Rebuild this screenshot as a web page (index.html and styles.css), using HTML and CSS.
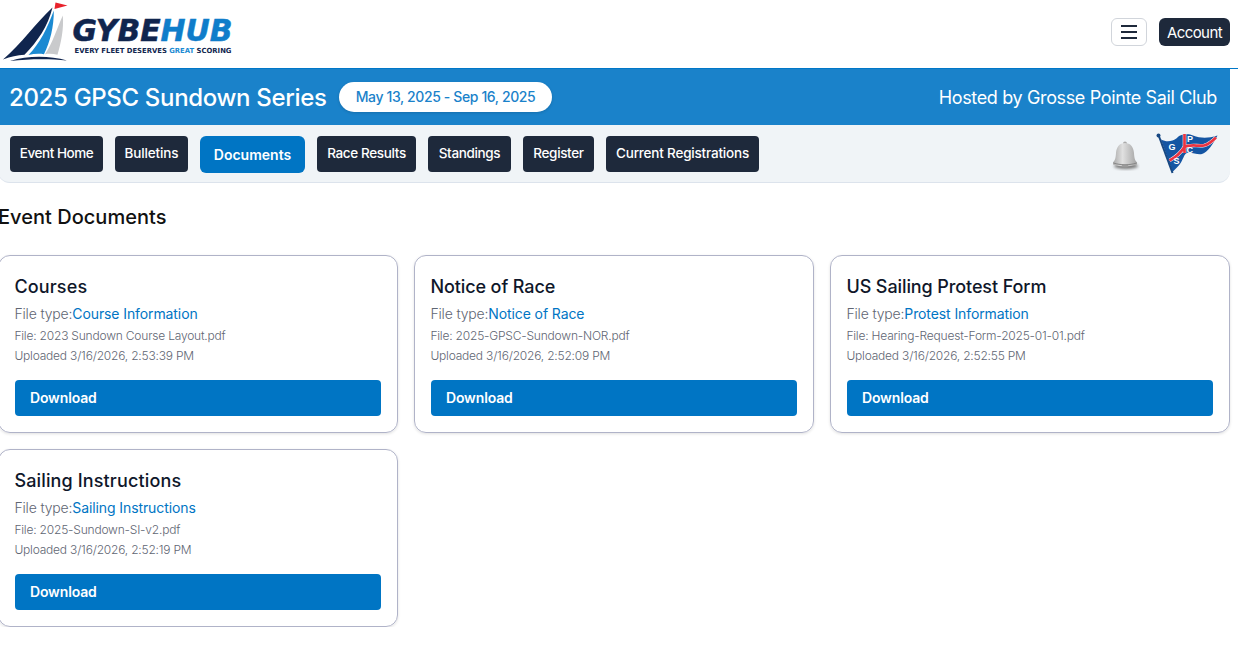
FILE: index.html
```html
<!DOCTYPE html>
<html lang="en">
<head>
    <meta charset="UTF-8">
    <meta name="viewport" content="width=device-width, initial-scale=1.0">
    <title>2025 GPSC Sundown Series - GybeHub</title>
    <link rel="stylesheet" href="styles.css">
</head>
<body>
    <!-- Top bar -->
    <header class="top-bar">
        <a href="#" class="logo">
            <svg width="240" height="68" viewBox="0 0 240 68" role="img" aria-label="GybeHub">
                <path d="M52.500 7.500C35 24 22 43 3 59.500c8-3 14-4.300 21.500-4.800C38 41 48 26 52.500 7.500z" fill="#10254e"/>
                <path d="M53.800 10.500C47 29 40 43 28.500 55c5-1.200 10.500-1.500 15.500-.8C50 42 54 27 53.800 10.500z" fill="#1b8ad2"/>
                <path d="M62.800 15.500C56 31 53 42 45 54.200c4-.6 8.500-.4 12.500.6C61 43 64 29 62.800 15.500z" fill="#c9cacc"/>
                <path d="M55.500 2.500L67.500 5.500 54.500 9z" fill="#e8222c"/>
                <path d="M10 61c18-5.500 39-5.500 57-.5-18-2-37-1.800-57 .5z" fill="#10254e"/>
                <text class="logo-name" x="72.500" y="41" textLength="160" lengthAdjust="spacingAndGlyphs"><tspan fill="#10254e" stroke="#10254e">GYBE</tspan><tspan fill="#0f7dca" stroke="#0f7dca">HUB</tspan></text>
                <text class="logo-tagline" x="74.500" y="53" textLength="157" lengthAdjust="spacingAndGlyphs"><tspan>EVERY FLEET DESERVES </tspan><tspan fill="#1b8ad2">GREAT</tspan><tspan> SCORING</tspan></text>
            </svg>
        </a>
        <div class="top-actions">
            <button class="menu-button" aria-label="Menu">
                <svg width="18" height="16" viewBox="0 0 18 16"><path d="M1 2h16M1 8h16M1 14h16" stroke="#1e293b" stroke-width="2"/></svg>
            </button>
            <button class="account-button">Account</button>
        </div>
    </header>

    <main class="event">
        <!-- Event banner -->
        <div class="banner">
            <h1 class="event-title">2025 GPSC Sundown Series</h1>
            <span class="event-dates">May 13, 2025 - Sep 16, 2025</span>
            <span class="event-host">Hosted by Grosse Pointe Sail Club</span>
        </div>

        <nav class="event-nav">
            <a href="#" class="nav-button home">Event Home</a>
            <a href="#" class="nav-button bulletins">Bulletins</a>
            <a href="#" class="nav-button active">Documents</a>
            <a href="#" class="nav-button results">Race Results</a>
            <a href="#" class="nav-button standings">Standings</a>
            <a href="#" class="nav-button register">Register</a>
            <a href="#" class="nav-button registrations">Current Registrations</a>
            <svg class="bell" width="30" height="32" viewBox="0 0 30 32">
                <defs>
                    <linearGradient id="bell-metal">
                        <stop offset="0" stop-color="#aaa"/>
                        <stop offset=".4" stop-color="#e0e0e0"/>
                        <stop offset="1" stop-color="#a3a3a3"/>
                    </linearGradient>
                </defs>
                <ellipse class="bell-shadow" cx="16" cy="27" rx="12" ry="3"/>
                <circle cx="15" cy="4.500" r="2" fill="#aaa"/>
                <path d="M15 4c5.500 0 8.500 4 9 10 .3 5 .8 7 3 9.500v2c-7 2.500-17 2.500-24 0v-2c2.200-2.500 2.700-4.500 3-9.500.5-6 3.500-10 9-10z" fill="url(#bell-metal)"/>
                <path d="M3.500 24c6.500 2.300 16.500 2.300 23 0" fill="none" stroke="#858585"/>
                <ellipse cx="15" cy="27" rx="3.500" ry="1.600" fill="#999"/>
            </svg>
            <svg class="burgee" width="62" height="44" viewBox="0 0 62 44">
                <path d="M5 6.500c6 3 11 2 16-1.500C23 1.500 32 0 37 2.500c8 3 15 3 24.500 0C57 11 52 19 46 21c-5 1-10-2-15-1-3 1-4 7-7 11-2 3-5 5-7.500 8z" fill="#1455a3"/>
                <path d="M13.500 27.500C20 24 24 21 28 14.500c6-4 13-1 20-2 5-1 8-4 12-8" fill="none" stroke="#fff" stroke-width="3.600"/>
                <path d="M28.500 1v19" stroke="#fff" stroke-width="3.600"/>
                <path d="M13.500 27.500C20 24 24 21 28 14.500c6-4 13-1 20-2 5-1 8-4 12-8M28.500 1v19" fill="none" stroke="#e93442" stroke-width="2.700"/>
                <path d="M2.500 2L16.500 40" stroke="#174883" stroke-width="2"/>
                <circle cx="2.500" cy="2.500" r="2" fill="#174883"/>
                <g class="burgee-letters">
                    <text x="12.500" y="17">G</text>
                    <text x="31" y="8.500">P</text>
                    <text x="30.500" y="20">C</text>
                    <text x="17.500" y="31">S</text>
                </g>
            </svg>
        </nav>

        <h2 class="section-title">Event Documents</h2>

        <!-- Documents -->
        <div class="documents">
            <article class="card">
                <h3 class="card-title wide">Courses</h3>
                <p class="file-type">File type:<span>Course Information</span></p>
                <p class="file-info">File: 2023 Sundown Course Layout.pdf</p>
                <p class="file-info">Uploaded 3/16/2026, 2:53:39 PM</p>
                <a href="#" class="download">Download</a>
            </article>
            <article class="card">
                <h3 class="card-title">Notice of Race</h3>
                <p class="file-type">File type:<span>Notice of Race</span></p>
                <p class="file-info">File: 2025-GPSC-Sundown-NOR.pdf</p>
                <p class="file-info">Uploaded 3/16/2026, 2:52:09 PM</p>
                <a href="#" class="download">Download</a>
            </article>
            <article class="card">
                <h3 class="card-title">US Sailing Protest Form</h3>
                <p class="file-type">File type:<span>Protest Information</span></p>
                <p class="file-info">File: Hearing-Request-Form-2025-01-01.pdf</p>
                <p class="file-info">Uploaded 3/16/2026, 2:52:55 PM</p>
                <a href="#" class="download">Download</a>
            </article>
            <article class="card">
                <h3 class="card-title wide">Sailing Instructions</h3>
                <p class="file-type">File type:<span>Sailing Instructions</span></p>
                <p class="file-info">File: 2025-Sundown-SI-v2.pdf</p>
                <p class="file-info">Uploaded 3/16/2026, 2:52:19 PM</p>
                <a href="#" class="download">Download</a>
            </article>
        </div>
    </main>
</body>
</html>
```

FILE: styles.css
```css
* {
    box-sizing: border-box;
}

body {
    margin: 0;
    font-family: Inter, "Open Sans", sans-serif;
    background-color: #fff;
    color: #0f172a;
    overflow-x: hidden;
}

h1, h2, h3, p {
    margin: 0;
    font-weight: 500;
}

a {
    text-decoration: none;
}

svg {
    display: block;
}

/* Top bar */
.top-bar {
    height: 69px;
    display: flex;
    justify-content: space-between;
    border-bottom: 1px solid #0077c8;
    padding-right: 8px;
}

.logo-name {
    font: italic bold 29.5px "DejaVu Sans", sans-serif;
    stroke-width: 0.5px;
}

.logo-tagline {
    font: bold 7px "DejaVu Sans", sans-serif;
    fill: #10254e;
}

.top-actions {
    display: flex;
    gap: 12px;
    padding-top: 18px;
}

.menu-button {
    width: 36px;
    height: 28px;
    padding: 0;
    display: flex;
    align-items: center;
    justify-content: center;
    background-color: #fff;
    border: 1px solid #d1d5db;
    border-radius: 6px;
}

.account-button {
    width: 71px;
    height: 28px;
    padding: 0;
    font: 15px Inter, sans-serif;
    letter-spacing: -0.6px;
    color: #fff;
    background-color: #1e293b;
    border: none;
    border-radius: 6px;
}

/* Event banner */
.event {
    width: 1232px;
    margin-left: -2px;
}

.banner {
    height: 56px;
    display: flex;
    align-items: center;
    padding: 0 13px 0 11px;
    background-color: #1a82ca;
    color: #fff;
}

.event-title {
    width: 330px;
    font-size: 24px;
    letter-spacing: -0.33px;
    white-space: nowrap;
}

.event-dates {
    width: 213px;
    height: 30px;
    line-height: 30px;
    border-radius: 15px;
    background-color: #fff;
    color: #1a82ca;
    font-size: 14px;
    font-weight: 500;
    letter-spacing: -0.38px;
    text-align: center;
    box-shadow: 0 1px 3px rgba(0, 0, 0, 0.15);
}

.event-host {
    margin-left: auto;
    font-size: 18px;
    letter-spacing: -0.36px;
}

/* Navigation */
.event-nav {
    height: 58px;
    display: flex;
    gap: 12px;
    padding: 11px 12px 0;
    background-color: #f0f4f7;
    border-bottom: 1px solid #dce3ec;
    border-radius: 0 0 12px 12px;
}

.nav-button {
    height: 36px;
    line-height: 35px;
    border-radius: 4px;
    background-color: #1e293b;
    color: #fff;
    font-size: 13.5px;
    font-weight: 500;
    letter-spacing: -0.35px;
    text-align: center;
    white-space: nowrap;
}

.home { width: 93px; letter-spacing: -0.45px; }
.bulletins { width: 73px; letter-spacing: -0.15px; }
.results { width: 99px; }
.standings { width: 83px; }
.register { width: 71px; }
.registrations { width: 153px; letter-spacing: -0.2px; }

.nav-button.active {
    width: 105px;
    height: 37px;
    line-height: 38px;
    border-radius: 6px;
    background-color: #0075c4;
    font-size: 14px;
    font-weight: 600;
    letter-spacing: 0;
}

.bell {
    margin: 3px 4px 0 auto;
}

.bell-shadow {
    fill: #777;
    filter: blur(1.5px);
}

.burgee {
    margin-top: -3px;
}

.burgee-letters {
    font: bold 9px "Liberation Sans", sans-serif;
    fill: #fff;
}

/* Documents */
.section-title {
    padding-top: 20px;
    font-size: 20px;
    line-height: 28px;
    letter-spacing: 0.02px;
    color: #111;
}

.documents {
    display: grid;
    grid-template-columns: repeat(3, 400px);
    gap: 16px;
    margin-top: 24px;
}

.card {
    height: 178px;
    padding: 17px 16px 16px;
    border: 1px solid #b0b3c8;
    border-radius: 12px;
    box-shadow: 0 1px 3px rgba(0, 0, 0, 0.12);
}

.card-title,
.file-type,
.file-info {
    margin-left: -0.6px;
}

.card-title {
    font-size: 18px;
    line-height: 28px;
    letter-spacing: -0.1px;
}

.card-title.wide {
    letter-spacing: 0.14px;
}

.file-type {
    font-size: 14px;
    font-weight: 300;
    line-height: 26px;
    letter-spacing: -0.17px;
    color: #5f6673;
}

.file-type span {
    color: #0075c4;
    font-weight: 400;
    letter-spacing: -0.1px;
}

.file-info {
    font-size: 12px;
    font-weight: 300;
    line-height: 20px;
    letter-spacing: -0.2px;
    color: #5f6673;
}

.file-type + .file-info {
    margin-top: -1px;
}

.download {
    display: block;
    height: 36px;
    margin-top: 14px;
    padding-left: 15px;
    line-height: 36px;
    border-radius: 4px;
    background-color: #0075c4;
    color: #fff;
    font-size: 14px;
    font-weight: 600;
    letter-spacing: -0.15px;
}
```
